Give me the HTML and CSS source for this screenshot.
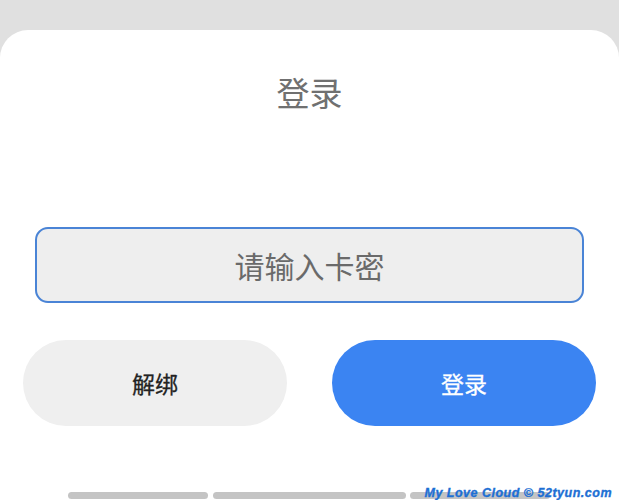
FILE: index.html
```html
<!DOCTYPE html>
<html lang="zh-CN">
<head>
<meta charset="utf-8">
<title>登录</title>
<link rel="stylesheet" href="styles.css">
</head>
<body>
<div class="sheet">
  <h1 class="title">登录</h1>
  <div class="field">
    <input class="input" type="text" placeholder="请输入卡密">
  </div>
  <div class="actions">
    <button class="btn btn-light" type="button">解绑</button>
    <button class="btn btn-primary" type="button">登录</button>
  </div>
  <div class="footer">
    <div class="bars">
      <span class="bar bar-1"></span>
      <span class="bar bar-2"></span>
      <span class="bar bar-3"></span>
    </div>
    <div class="watermark">My Love Cloud © 52tyun.com</div>
  </div>
</div>
</body>
</html>
```

FILE: styles.css
```css
html, body {
  margin: 0;
  padding: 0;
  height: 100%;
}
body {
  background: #e0e0e0;
  font-family: "Noto Sans CJK SC", "Noto Sans", sans-serif;
  overflow: hidden;
}
.sheet {
  margin-top: 30px;
  height: 470px;
  background: #ffffff;
  border-radius: 28px 28px 0 0;
  display: flex;
  flex-direction: column;
  box-sizing: border-box;
  padding-top: 46px;
}
.title {
  margin: 0;
  text-align: center;
  font-size: 33px;
  line-height: 33px;
  font-weight: 400;
  color: #707070;
}
.field {
  margin-top: 118px;
  padding: 0 35px;
}
.input {
  display: block;
  width: 100%;
  box-sizing: border-box;
  height: 76px;
  border: 2px solid #4a84d6;
  border-radius: 13px;
  background: #eeeeee;
  font-family: "Noto Sans CJK SC", "Noto Sans", sans-serif;
  font-size: 30px;
  text-align: center;
  color: #333;
  outline: none;
  padding: 0 12px;
}
.input::placeholder {
  color: #6a6a6a;
}
.actions {
  margin-top: 37px;
  padding: 0 23px;
  display: flex;
  gap: 45px;
}
.btn {
  flex: 1;
  height: 86px;
  border: none;
  border-radius: 43px;
  font-family: "Noto Sans CJK SC", "Noto Sans", sans-serif;
  font-size: 23px;
  font-weight: 400;
  cursor: pointer;
}
.btn-light {
  background: #efefef;
  color: #222222;
  -webkit-text-stroke: 0.3px #222222;
}
.btn-primary {
  background: #3b84f2;
  color: #ffffff;
  -webkit-text-stroke: 0.3px #ffffff;
}
.footer {
  margin-top: auto;
  position: relative;
  height: 8px;
}
.bars {
  display: flex;
  padding-left: 68px;
  gap: 4px;
}
.bar {
  height: 7px;
  background: #c4c4c4;
  border-radius: 4px;
}
.bar-1 { width: 140px; margin-right: 1px; }
.bar-2 { width: 193px; }
.bar-3 { width: 140px; }
.watermark {
  position: absolute;
  right: 7px;
  bottom: 1px;
  font-family: "Liberation Sans", Arial, sans-serif;
  font-weight: 700;
  font-style: italic;
  font-size: 12.5px;
  letter-spacing: 0.5px;
  line-height: 1;
  color: #1d6fd4;
  -webkit-text-stroke: 0.35px #1d6fd4;
  white-space: nowrap;
}
```
